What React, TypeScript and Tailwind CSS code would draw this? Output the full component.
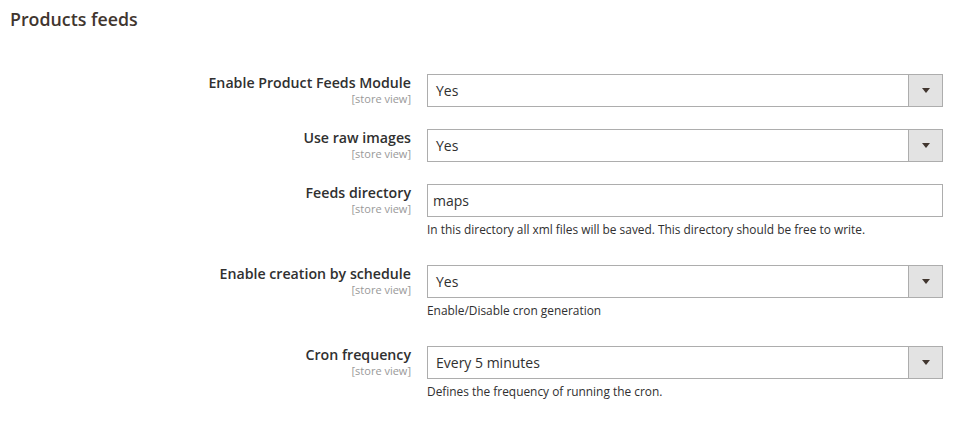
import React from "react";

interface Field {
  label: string;
  type: "select" | "text";
  value: string;
  note?: string;
}

const fields: Field[] = [
  { label: "Enable Product Feeds Module", type: "select", value: "Yes" },
  { label: "Use raw images", type: "select", value: "Yes" },
  {
    label: "Feeds directory",
    type: "text",
    value: "maps",
    note: "In this directory all xml files will be saved. This directory should be free to write.",
  },
  {
    label: "Enable creation by schedule",
    type: "select",
    value: "Yes",
    note: "Enable/Disable cron generation",
  },
  {
    label: "Cron frequency",
    type: "select",
    value: "Every 5 minutes",
    note: "Defines the frequency of running the cron.",
  },
];

function SelectBox({ value }: { value: string }) {
  return (
    <div className="flex h-[33px] w-full border border-[#adadad] bg-white">
      <div className="flex flex-1 items-center pl-2 text-[14px] text-[#303030]">{value}</div>
      <div className="flex w-[34px] items-center justify-center border-l border-[#adadad] bg-[#e3e3e3]">
        <svg width="8" height="5" viewBox="0 0 8 5">
          <path d="M0 0 H8 L4 5 Z" fill="#41362f" />
        </svg>
      </div>
    </div>
  );
}

function TextBox({ value }: { value: string }) {
  return (
    <div className="flex h-[33px] w-full items-center border border-[#adadad] bg-white pl-[5px] text-[14px] text-[#303030]">
      {value}
    </div>
  );
}

export default function App() {
  return (
    <div className="min-h-screen bg-white pt-[8px] font-['Open_Sans',sans-serif]">
      <h2 className="pl-[10px] text-[17.8px] font-semibold leading-[22px] text-[#41362f]">Products feeds</h2>

      <div className="mt-[44px]">
        {fields.map((f) => (
          <div key={f.label} className="flex pb-[22px]">
            <div className="w-[411px] shrink-0 text-right">
              <div className="text-[14.2px] font-semibold leading-[17px] text-[#303030]">{f.label}</div>
              <div className="mt-[1px] text-[11px] leading-[13px] text-[#999999]">[store view]</div>
            </div>
            <div className="ml-[16px] w-[516px]">
              {f.type === "select" ? <SelectBox value={f.value} /> : <TextBox value={f.value} />}
              {f.note && (
                <div className="mt-1 mb-[6px] text-[11.9px] leading-4 text-[#303030]">{f.note}</div>
              )}
            </div>
          </div>
        ))}
      </div>
    </div>
  );
}
